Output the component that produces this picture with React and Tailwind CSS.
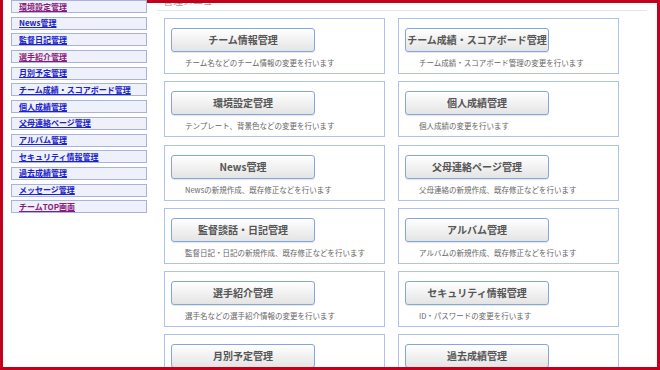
const sideLinks = [
  { label: '環境設定管理', visited: true },
  { label: 'News管理' },
  { label: '監督日記管理' },
  { label: '選手紹介管理', visited: true },
  { label: '月別予定管理' },
  { label: 'チーム成績・スコアボード管理' },
  { label: '個人成績管理' },
  { label: '父母連絡ページ管理' },
  { label: 'アルバム管理' },
  { label: 'セキュリティ情報管理' },
  { label: '過去成績管理' },
  { label: 'メッセージ管理' },
  { label: 'チームTOP画面', visited: true },
]

const menus = [
  { title: 'チーム情報管理', desc: 'チーム名などのチーム情報の変更を行います' },
  { title: 'チーム成績・スコアボード管理', desc: 'チーム成績・スコアボード管理の変更を行います' },
  { title: '環境設定管理', desc: 'テンプレート、背景色などの変更を行います' },
  { title: '個人成績管理', desc: '個人成績の変更を行います' },
  { title: 'News管理', desc: 'Newsの新規作成、既存修正などを行います' },
  { title: '父母連絡ページ管理', desc: '父母連絡の新規作成、既存修正などを行います' },
  { title: '監督談話・日記管理', desc: '監督日記・日記の新規作成、既存修正などを行います' },
  { title: 'アルバム管理', desc: 'アルバムの新規作成、既存修正などを行います' },
  { title: '選手紹介管理', desc: '選手名などの選手紹介情報の変更を行います' },
  { title: 'セキュリティ情報管理', desc: 'ID・パスワードの変更を行います' },
  { title: '月別予定管理', desc: '月別予定の新規作成、既存修正などを行います' },
  { title: '過去成績管理', desc: '過去成績の新規作成、既存修正などを行います' },
]

const jp = { fontFamily: '"Noto Sans CJK JP", "Noto Sans", sans-serif' }

const MenuCard = ({ title, desc }) => (
  <div className="h-[56px] border border-[#adc2ec] bg-white pl-[6px] pt-[6px]">
    <button
      className="w-[144px] h-[24px] rounded-[3px] border border-[#85a6dc] bg-gradient-to-b from-white to-[#e4e4e4] text-[10px] font-bold text-[#555] leading-none shadow-[0_1px_1px_rgba(0,0,0,0.1)]"
      style={jp}
    >
      {title}
    </button>
    <p className="mt-[7px] pl-[14px] text-[7.5px] leading-none text-[#666] whitespace-nowrap" style={jp}>
      {desc}
    </p>
  </div>
)

export default function App() {
  return (
    <div className="w-[660px] h-[370px] overflow-hidden flex bg-white border-l-[3px] border-r-[3px] border-b-[3px] border-[#c3001b]" style={jp}>
      <aside className="w-[144px] shrink-0 pl-[8px] flex flex-col gap-[3.7px]">
        {sideLinks.map((item) => (
          <a
            key={item.label}
            href="#"
            className={`h-[13px] shrink-0 flex items-center pl-[7px] bg-[#eef0fa] border border-[#a7b2de] text-[8px] font-bold leading-none underline whitespace-nowrap ${item.visited ? 'text-[#8a1a7a]' : 'text-[#1a22c8]'}`}
          >
            {item.label}
          </a>
        ))}
      </aside>

      <main className="flex-1 border-t-[3px] border-[#c3001b]">
        <div className="ml-[10px] w-[490px] h-[8px] border-b border-[#dfe6f4] overflow-hidden">
          <h2 className="-mt-[7px] pl-[6px] text-[10px] text-[#999] leading-none">管理メニュー</h2>
        </div>
        <div className="ml-[17px] mt-[7px] grid grid-cols-[221px_221px] gap-x-[13px] gap-y-[7.3px]">
          {menus.map((m) => (
            <MenuCard key={m.title} title={m.title} desc={m.desc} />
          ))}
        </div>
      </main>
    </div>
  )
}
